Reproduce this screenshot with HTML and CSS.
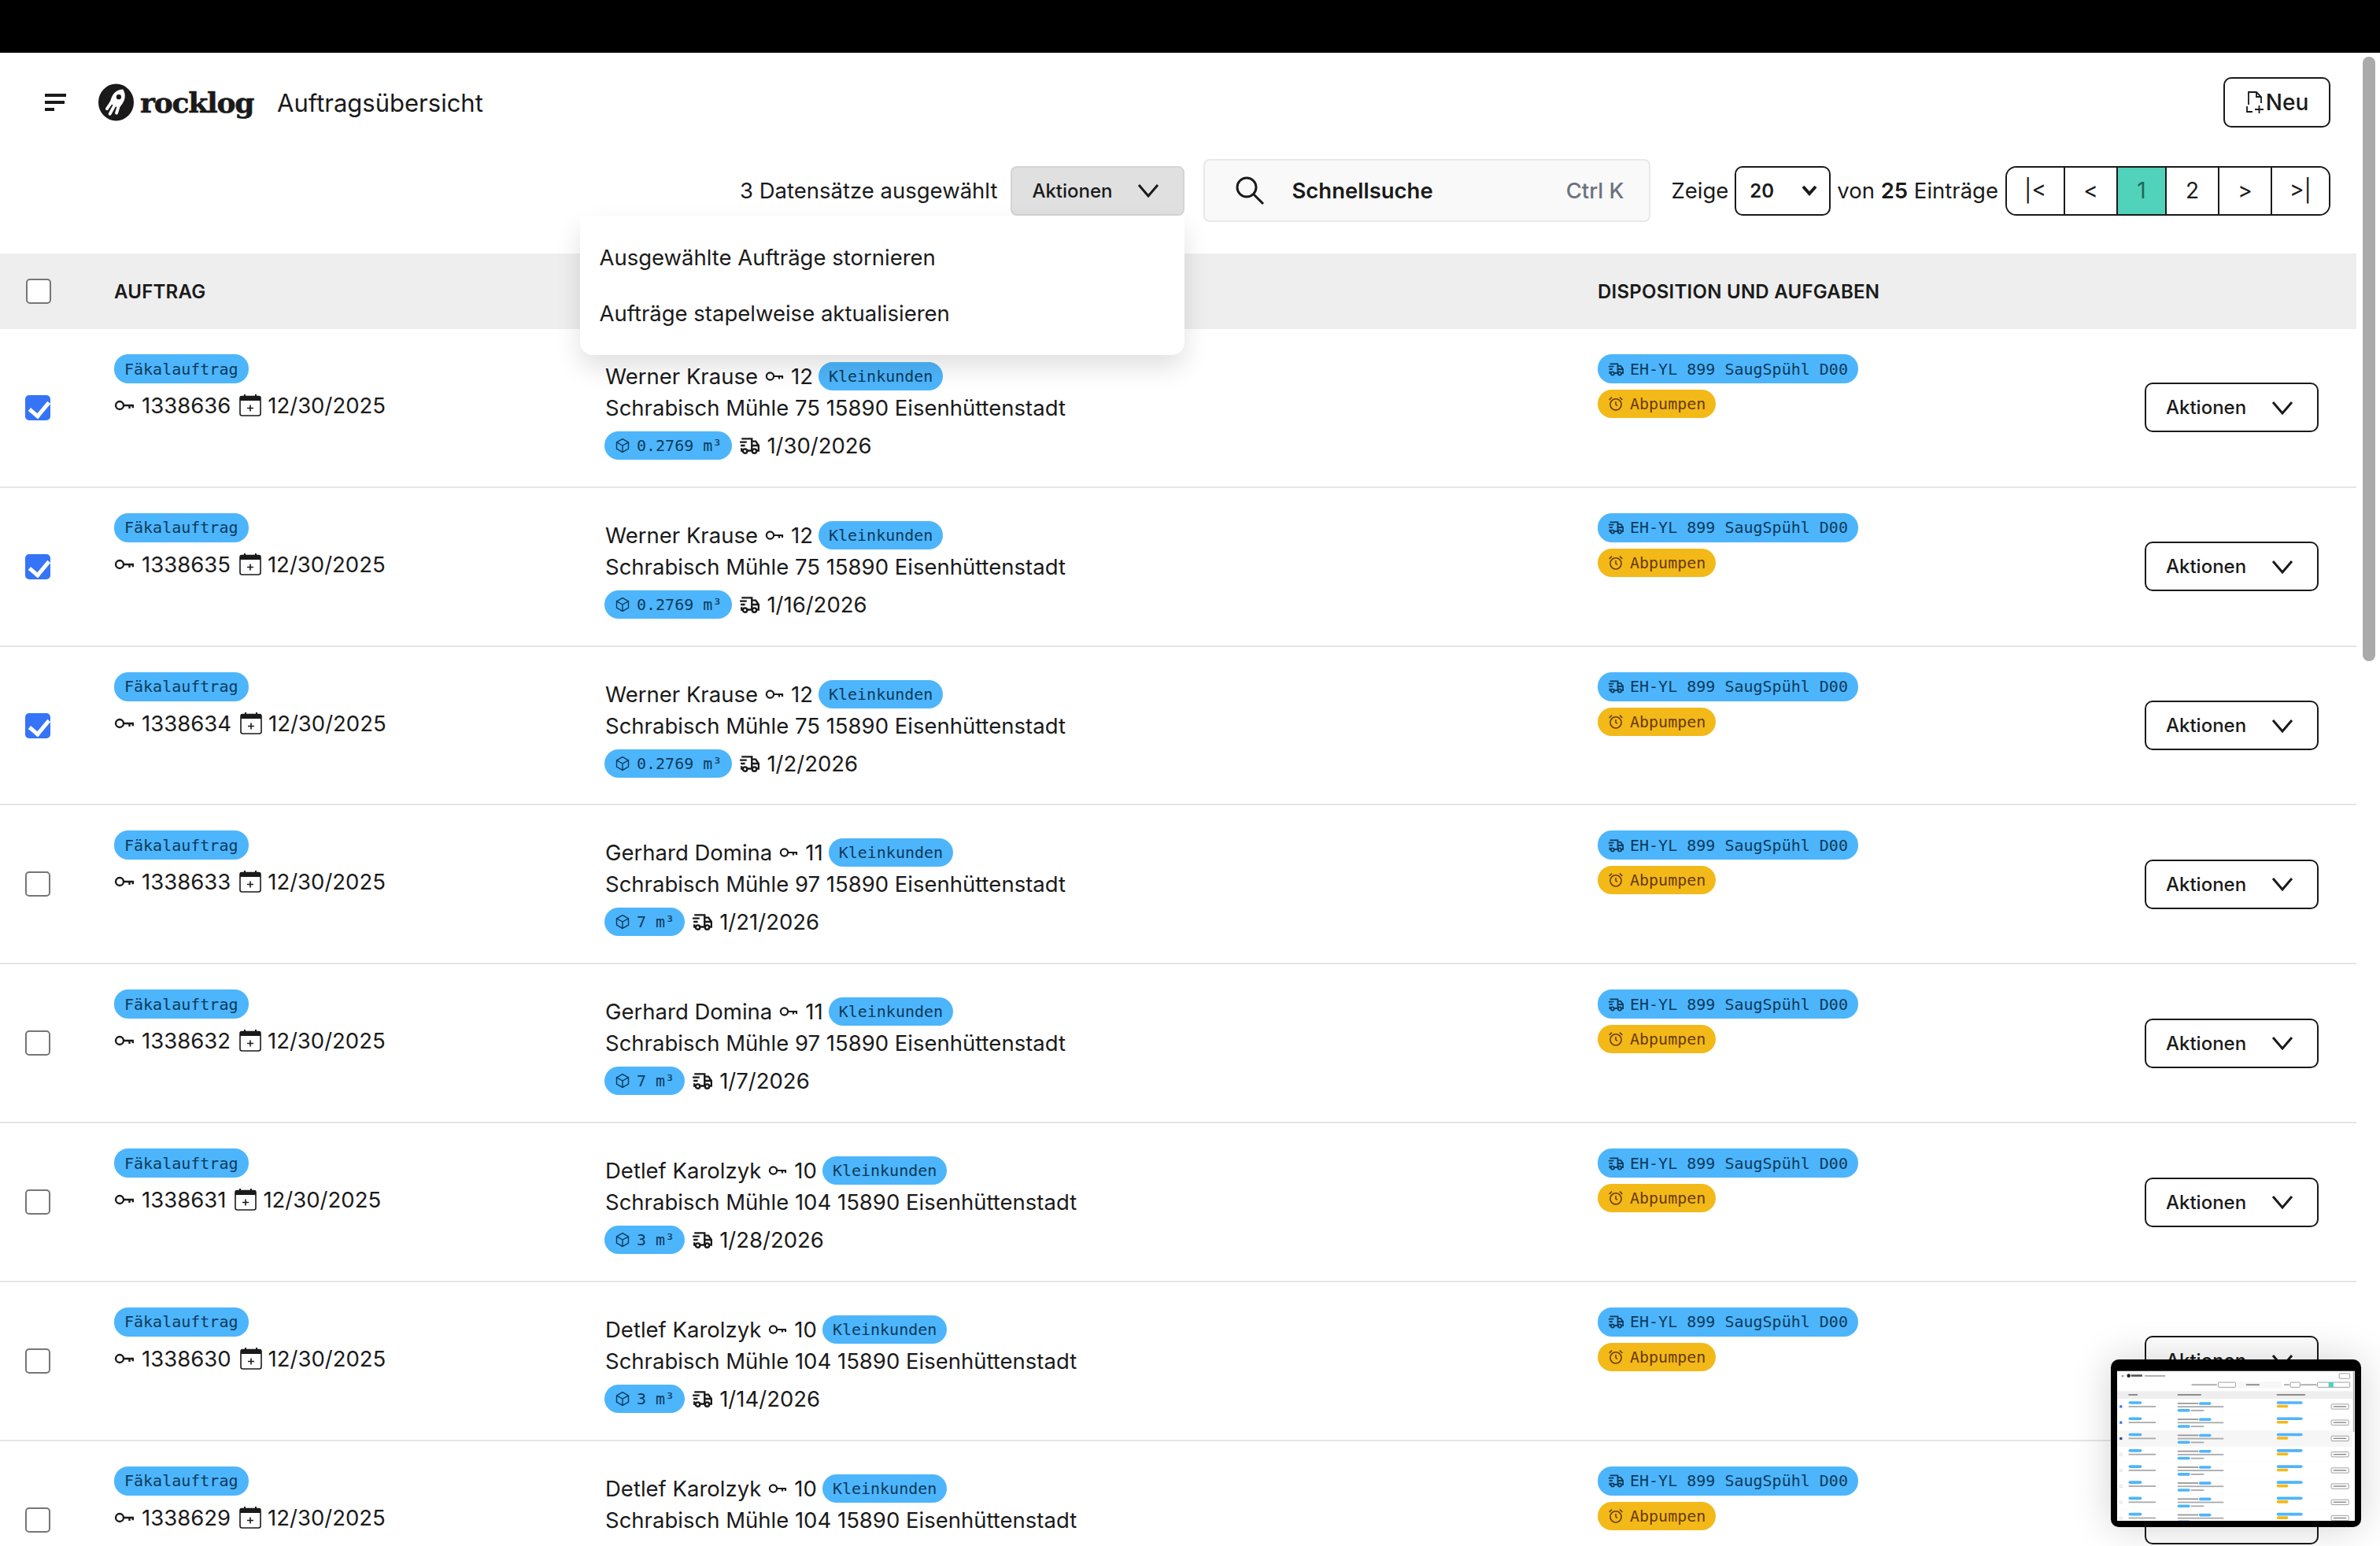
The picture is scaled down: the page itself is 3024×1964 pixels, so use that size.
FILE: index.html
```html
<!DOCTYPE html>
<html lang="de">
<head>
    <meta charset="UTF-8">
    <meta name="viewport" content="width=device-width, initial-scale=1.0">
    <title>Auftragsübersicht</title>
    <link rel="stylesheet" href="styles.css">
</head>
<body>
    <!-- shared icons -->
    <svg class="icon-defs" width="0" height="0">
        <symbol id="i-key" viewBox="0 0 24 24"><g fill="none" stroke="currentColor" stroke-width="2.2"><circle cx="6.5" cy="12" r="4.6"/><path d="M11 12h12M18 12v3.6M22 12v3"/></g></symbol>
        <symbol id="i-cal" viewBox="0 0 28 28"><g fill="none" stroke="currentColor" stroke-width="1.6"><rect x="1" y="2.5" width="26" height="24.5" rx="2.5"/><path d="M10 17.5h8M14 13.5v8"/></g><path d="M1 2.5h26v5.5H1z" fill="currentColor"/><path d="M7 0v3M21 0v3" stroke="currentColor" stroke-width="2"/></symbol>
        <symbol id="i-truck" viewBox="0 0 24 24"><g fill="none" stroke="currentColor" stroke-width="2.2"><path d="M3 4h12v14M1 8h8M2 12h5M3 15v3h1.500M10 18h5"/><path d="M15 7h4.500L23 12v6h-2M15 12h8"/><circle cx="7" cy="18.5" r="2.500"/><circle cx="18" cy="18.5" r="2.500"/></g></symbol>
        <symbol id="i-box" viewBox="0 0 24 24"><g fill="none" stroke="currentColor" stroke-width="1.7"><path d="M12 2l9 5v10l-9 5-9-5V7z"/><path d="M3 7l9 5 9-5M12 12v10"/></g></symbol>
        <symbol id="i-alarm" viewBox="0 0 24 24"><g fill="none" stroke="currentColor" stroke-width="1.9"><circle cx="12" cy="13" r="8.500"/><path d="M12 8.500V13l2.500 2M2 6l4-4M22 6l-4-4"/></g></symbol>
        <symbol id="i-chev" viewBox="0 0 28 18"><path d="M2 2l12 14L26 2" fill="none" stroke="currentColor" stroke-width="3"/></symbol>
    </svg>

    <div class="system-bar"></div>

    <div class="page">
        <header class="top">
            <div class="brand">
                <div class="burger"><span></span><span></span><span></span></div>
                <svg class="logo" viewBox="0 0 48 48">
                    <ellipse cx="24" cy="24" rx="23" ry="24" fill="#1a1a1a"/>
                    <g transform="rotate(28 24 24)">
                        <path d="M24 5c7 4 9 11 8 17l-1 7H17l-1-7c-1-6 1-13 8-17z" fill="#fff"/>
                        <path d="M18.500 28l-1 9M24 28v13M29.500 28l1.500 8" fill="none" stroke="#fff" stroke-width="4" stroke-linecap="round"/>
                    </g>
                    <circle cx="27.500" cy="17" r="3.200" fill="#1a1a1a"/>
                </svg>
                <span class="logo-text">rocklog</span>
                <h1 class="page-title">Auftragsübersicht</h1>
            </div>
            <button class="btn-new">
                <svg class="new-icon" viewBox="0 0 24 30"><path d="M4 18V2h10l6 6v8M14 2v6h6M2 20v7h7M12 24h11M17.500 19v10" fill="none" stroke="currentColor" stroke-width="1.8"/></svg>
                Neu
            </button>
        </header>

        <div class="toolbar">
            <span class="selected-info">3 Datensätze ausgewählt</span>
            <div class="bulk-wrap">
                <button class="btn-actions bulk">Aktionen <svg class="chev"><use href="#i-chev"/></svg></button>
                <div class="bulk-menu">
                    <a class="bulk-item">Ausgewählte Aufträge stornieren</a>
                    <a class="bulk-item">Aufträge stapelweise aktualisieren</a>
                </div>
            </div>
            <div class="search">
                <svg class="search-icon" viewBox="0 0 38 38"><g fill="none" stroke="#1a1a1a" stroke-width="3"><circle cx="15" cy="15" r="12"/><path d="M24 24l12 12"/></g></svg>
                <span class="search-label">Schnellsuche</span>
                <span class="search-key">Ctrl K</span>
            </div>
            <span class="show-label">Zeige</span>
            <div class="page-size">20 <svg viewBox="0 0 20 14"><path d="M2 2l8 9 8-9" fill="none" stroke="#1a1a1a" stroke-width="4"/></svg></div>
            <span class="count-label">von <b>25</b> Einträge</span>
            <div class="pager">
                <button class="pager-first">|&lt;</button>
                <button>&lt;</button>
                <button class="current">1</button>
                <button>2</button>
                <button>&gt;</button>
                <button class="pager-last">&gt;|</button>
            </div>
        </div>

        <div class="table">
            <div class="row head">
                <div class="cell-check"><input type="checkbox"></div>
                <div>AUFTRAG</div>
                <div>KUNDE UND LIEFERUNG</div>
                <div>DISPOSITION UND AUFGABEN</div>
                <div></div>
            </div>

            <div class="row">
                <div class="cell-check"><input type="checkbox" checked></div>
                <div class="cell-order">
                    <span class="badge">Fäkalauftrag</span>
                    <div class="order-line"><svg class="ic-key"><use href="#i-key"/></svg>1338636<svg class="ic-cal"><use href="#i-cal"/></svg>12/30/2025</div>
                </div>
                <div class="cell-customer">
                    <div class="cust-line">Werner Krause<svg class="ic-key small"><use href="#i-key"/></svg>12<span class="badge low">Kleinkunden</span></div>
                    <div class="cust-line">Schrabisch Mühle 75 15890 Eisenhüttenstadt</div>
                    <div class="cust-line third"><span class="badge low"><svg class="ic-badge"><use href="#i-box"/></svg>0.2769 m³</span><svg class="ic-truck"><use href="#i-truck"/></svg>1/30/2026</div>
                </div>
                <div class="cell-dispo">
                    <span class="badge"><svg class="ic-badge"><use href="#i-truck"/></svg>EH-YL 899 SaugSpühl D00</span>
                    <span class="badge low amber"><svg class="ic-badge"><use href="#i-alarm"/></svg>Abpumpen</span>
                </div>
                <div class="cell-action"><button class="btn-actions">Aktionen <svg class="chev"><use href="#i-chev"/></svg></button></div>
            </div>

            <div class="row">
                <div class="cell-check"><input type="checkbox" checked></div>
                <div class="cell-order">
                    <span class="badge">Fäkalauftrag</span>
                    <div class="order-line"><svg class="ic-key"><use href="#i-key"/></svg>1338635<svg class="ic-cal"><use href="#i-cal"/></svg>12/30/2025</div>
                </div>
                <div class="cell-customer">
                    <div class="cust-line">Werner Krause<svg class="ic-key small"><use href="#i-key"/></svg>12<span class="badge low">Kleinkunden</span></div>
                    <div class="cust-line">Schrabisch Mühle 75 15890 Eisenhüttenstadt</div>
                    <div class="cust-line third"><span class="badge low"><svg class="ic-badge"><use href="#i-box"/></svg>0.2769 m³</span><svg class="ic-truck"><use href="#i-truck"/></svg>1/16/2026</div>
                </div>
                <div class="cell-dispo">
                    <span class="badge"><svg class="ic-badge"><use href="#i-truck"/></svg>EH-YL 899 SaugSpühl D00</span>
                    <span class="badge low amber"><svg class="ic-badge"><use href="#i-alarm"/></svg>Abpumpen</span>
                </div>
                <div class="cell-action"><button class="btn-actions">Aktionen <svg class="chev"><use href="#i-chev"/></svg></button></div>
            </div>

            <div class="row">
                <div class="cell-check"><input type="checkbox" checked></div>
                <div class="cell-order">
                    <span class="badge">Fäkalauftrag</span>
                    <div class="order-line"><svg class="ic-key"><use href="#i-key"/></svg>1338634<svg class="ic-cal"><use href="#i-cal"/></svg>12/30/2025</div>
                </div>
                <div class="cell-customer">
                    <div class="cust-line">Werner Krause<svg class="ic-key small"><use href="#i-key"/></svg>12<span class="badge low">Kleinkunden</span></div>
                    <div class="cust-line">Schrabisch Mühle 75 15890 Eisenhüttenstadt</div>
                    <div class="cust-line third"><span class="badge low"><svg class="ic-badge"><use href="#i-box"/></svg>0.2769 m³</span><svg class="ic-truck"><use href="#i-truck"/></svg>1/2/2026</div>
                </div>
                <div class="cell-dispo">
                    <span class="badge"><svg class="ic-badge"><use href="#i-truck"/></svg>EH-YL 899 SaugSpühl D00</span>
                    <span class="badge low amber"><svg class="ic-badge"><use href="#i-alarm"/></svg>Abpumpen</span>
                </div>
                <div class="cell-action"><button class="btn-actions">Aktionen <svg class="chev"><use href="#i-chev"/></svg></button></div>
            </div>

            <div class="row">
                <div class="cell-check"><input type="checkbox"></div>
                <div class="cell-order">
                    <span class="badge">Fäkalauftrag</span>
                    <div class="order-line"><svg class="ic-key"><use href="#i-key"/></svg>1338633<svg class="ic-cal"><use href="#i-cal"/></svg>12/30/2025</div>
                </div>
                <div class="cell-customer">
                    <div class="cust-line">Gerhard Domina<svg class="ic-key small"><use href="#i-key"/></svg>11<span class="badge low">Kleinkunden</span></div>
                    <div class="cust-line">Schrabisch Mühle 97 15890 Eisenhüttenstadt</div>
                    <div class="cust-line third"><span class="badge low"><svg class="ic-badge"><use href="#i-box"/></svg>7 m³</span><svg class="ic-truck"><use href="#i-truck"/></svg>1/21/2026</div>
                </div>
                <div class="cell-dispo">
                    <span class="badge"><svg class="ic-badge"><use href="#i-truck"/></svg>EH-YL 899 SaugSpühl D00</span>
                    <span class="badge low amber"><svg class="ic-badge"><use href="#i-alarm"/></svg>Abpumpen</span>
                </div>
                <div class="cell-action"><button class="btn-actions">Aktionen <svg class="chev"><use href="#i-chev"/></svg></button></div>
            </div>

            <div class="row">
                <div class="cell-check"><input type="checkbox"></div>
                <div class="cell-order">
                    <span class="badge">Fäkalauftrag</span>
                    <div class="order-line"><svg class="ic-key"><use href="#i-key"/></svg>1338632<svg class="ic-cal"><use href="#i-cal"/></svg>12/30/2025</div>
                </div>
                <div class="cell-customer">
                    <div class="cust-line">Gerhard Domina<svg class="ic-key small"><use href="#i-key"/></svg>11<span class="badge low">Kleinkunden</span></div>
                    <div class="cust-line">Schrabisch Mühle 97 15890 Eisenhüttenstadt</div>
                    <div class="cust-line third"><span class="badge low"><svg class="ic-badge"><use href="#i-box"/></svg>7 m³</span><svg class="ic-truck"><use href="#i-truck"/></svg>1/7/2026</div>
                </div>
                <div class="cell-dispo">
                    <span class="badge"><svg class="ic-badge"><use href="#i-truck"/></svg>EH-YL 899 SaugSpühl D00</span>
                    <span class="badge low amber"><svg class="ic-badge"><use href="#i-alarm"/></svg>Abpumpen</span>
                </div>
                <div class="cell-action"><button class="btn-actions">Aktionen <svg class="chev"><use href="#i-chev"/></svg></button></div>
            </div>

            <div class="row">
                <div class="cell-check"><input type="checkbox"></div>
                <div class="cell-order">
                    <span class="badge">Fäkalauftrag</span>
                    <div class="order-line"><svg class="ic-key"><use href="#i-key"/></svg>1338631<svg class="ic-cal"><use href="#i-cal"/></svg>12/30/2025</div>
                </div>
                <div class="cell-customer">
                    <div class="cust-line">Detlef Karolzyk<svg class="ic-key small"><use href="#i-key"/></svg>10<span class="badge low">Kleinkunden</span></div>
                    <div class="cust-line">Schrabisch Mühle 104 15890 Eisenhüttenstadt</div>
                    <div class="cust-line third"><span class="badge low"><svg class="ic-badge"><use href="#i-box"/></svg>3 m³</span><svg class="ic-truck"><use href="#i-truck"/></svg>1/28/2026</div>
                </div>
                <div class="cell-dispo">
                    <span class="badge"><svg class="ic-badge"><use href="#i-truck"/></svg>EH-YL 899 SaugSpühl D00</span>
                    <span class="badge low amber"><svg class="ic-badge"><use href="#i-alarm"/></svg>Abpumpen</span>
                </div>
                <div class="cell-action"><button class="btn-actions">Aktionen <svg class="chev"><use href="#i-chev"/></svg></button></div>
            </div>

            <div class="row">
                <div class="cell-check"><input type="checkbox"></div>
                <div class="cell-order">
                    <span class="badge">Fäkalauftrag</span>
                    <div class="order-line"><svg class="ic-key"><use href="#i-key"/></svg>1338630<svg class="ic-cal"><use href="#i-cal"/></svg>12/30/2025</div>
                </div>
                <div class="cell-customer">
                    <div class="cust-line">Detlef Karolzyk<svg class="ic-key small"><use href="#i-key"/></svg>10<span class="badge low">Kleinkunden</span></div>
                    <div class="cust-line">Schrabisch Mühle 104 15890 Eisenhüttenstadt</div>
                    <div class="cust-line third"><span class="badge low"><svg class="ic-badge"><use href="#i-box"/></svg>3 m³</span><svg class="ic-truck"><use href="#i-truck"/></svg>1/14/2026</div>
                </div>
                <div class="cell-dispo">
                    <span class="badge"><svg class="ic-badge"><use href="#i-truck"/></svg>EH-YL 899 SaugSpühl D00</span>
                    <span class="badge low amber"><svg class="ic-badge"><use href="#i-alarm"/></svg>Abpumpen</span>
                </div>
                <div class="cell-action"><button class="btn-actions">Aktionen <svg class="chev"><use href="#i-chev"/></svg></button></div>
            </div>

            <div class="row">
                <div class="cell-check"><input type="checkbox"></div>
                <div class="cell-order">
                    <span class="badge">Fäkalauftrag</span>
                    <div class="order-line"><svg class="ic-key"><use href="#i-key"/></svg>1338629<svg class="ic-cal"><use href="#i-cal"/></svg>12/30/2025</div>
                </div>
                <div class="cell-customer">
                    <div class="cust-line">Detlef Karolzyk<svg class="ic-key small"><use href="#i-key"/></svg>10<span class="badge low">Kleinkunden</span></div>
                    <div class="cust-line">Schrabisch Mühle 104 15890 Eisenhüttenstadt</div>
                </div>
                <div class="cell-dispo">
                    <span class="badge"><svg class="ic-badge"><use href="#i-truck"/></svg>EH-YL 899 SaugSpühl D00</span>
                    <span class="badge low amber"><svg class="ic-badge"><use href="#i-alarm"/></svg>Abpumpen</span>
                </div>
                <div class="cell-action"><button class="btn-actions">Aktionen <svg class="chev"><use href="#i-chev"/></svg></button></div>
            </div>
        </div>
    </div>

    <div class="scroll-thumb"></div>

    <!-- screenshot preview floating in the corner, coordinates are the page's own -->
    <div class="preview">
        <svg class="preview-screen" viewBox="0 0 3024 1964" preserveAspectRatio="none">
            <defs>
                <g id="mini-row">
                    <rect x="145" y="32" width="169" height="37" rx="18" fill="#4db5fb"/>
                    <rect x="146" y="90" width="345" height="18" fill="#aaa"/>
                    <rect x="769" y="50" width="265" height="18" fill="#999"/>
                    <rect x="1041" y="42" width="156" height="36" rx="18" fill="#4db5fb"/>
                    <rect x="769" y="92" width="585" height="18" fill="#aaa"/>
                    <rect x="768" y="130" width="161" height="36" rx="18" fill="#4db5fb"/>
                    <rect x="939" y="140" width="165" height="18" fill="#aaa"/>
                    <rect x="2030" y="32" width="329" height="37" rx="18" fill="#4db5fb"/>
                    <rect x="2030" y="77" width="148" height="36" rx="18" fill="#f2b918"/>
                    <rect x="2725" y="68" width="221" height="63" rx="10" fill="#fff" stroke="#888" stroke-width="8"/>
                    <rect x="2751" y="92" width="165" height="14" fill="#888"/>
                    <rect x="0" y="200" width="2994" height="2" fill="#eee"/>
                </g>
                <rect id="mini-on" x="32" y="84" width="32" height="32" rx="5" fill="#3574f7"/>
                <rect id="mini-off" x="32" y="84" width="32" height="32" rx="14" fill="#fff" stroke="#bbb" stroke-width="5"/>
            </defs>
            <rect width="3024" height="1964" fill="#fff"/>
            <rect width="3024" height="67" fill="#000"/>
            <rect x="57" y="120" width="27" height="22" fill="#999"/>
            <circle cx="147" cy="126" r="23" fill="#222"/>
            <rect x="178" y="112" width="142" height="26" fill="#555"/>
            <rect x="352" y="120" width="260" height="18" fill="#aaa"/>
            <rect x="2825" y="98" width="136" height="64" rx="10" fill="#fff" stroke="#888" stroke-width="8"/>
            <rect x="946" y="232" width="323" height="18" fill="#aaa"/>
            <rect x="1286" y="210" width="221" height="63" rx="10" fill="#fff" stroke="#888" stroke-width="8"/>
            <rect x="1531" y="202" width="566" height="80" fill="#f7f7f7"/>
            <rect x="1641" y="232" width="170" height="18" fill="#888"/>
            <rect x="2124" y="232" width="70" height="18" fill="#aaa"/>
            <rect x="2205" y="210" width="122" height="63" rx="10" fill="#fff" stroke="#888" stroke-width="8"/>
            <rect x="2335" y="232" width="204" height="18" fill="#aaa"/>
            <rect x="2548" y="210" width="413" height="63" rx="10" fill="#fff" stroke="#888" stroke-width="8"/>
            <rect x="2690" y="210" width="62" height="63" fill="#50d2bb"/>
            <rect y="322" width="2994" height="96" fill="#eee"/>
            <rect x="145" y="360" width="116" height="16" fill="#777"/>
            <rect x="769" y="360" width="300" height="16" fill="#777"/>
            <rect x="2030" y="360" width="362" height="16" fill="#777"/>
            <rect x="3002" y="72" width="14" height="768" rx="7" fill="#aaa"/>
            <rect y="822" width="2994" height="200" fill="#f6f6f6"/>
            <use href="#mini-row" y="418"/><use href="#mini-on" y="418"/>
            <use href="#mini-row" y="620"/><use href="#mini-on" y="620"/>
            <use href="#mini-row" y="822"/><rect x="32" y="906" width="32" height="32" fill="#25479e"/>
            <use href="#mini-row" y="1024"/><use href="#mini-off" y="1024"/>
            <use href="#mini-row" y="1226"/><use href="#mini-off" y="1226"/>
            <use href="#mini-row" y="1427"/><use href="#mini-off" y="1427"/>
            <use href="#mini-row" y="1629"/><use href="#mini-off" y="1629"/>
            <use href="#mini-row" y="1830"/><use href="#mini-off" y="1830"/>
        </svg>
    </div>
</body>
</html>
```

FILE: styles.css
```css
* {
    margin: 0;
    padding: 0;
    box-sizing: border-box;
    font-family: Inter, "Noto Sans", sans-serif;
}
body {
    position: relative;
    width: 3024px;
    height: 1964px;
    overflow: hidden;
    background: white;
    color: #1a1a1a;
    font-size: 27.5px;
}
button {
    background: white;
    color: #1a1a1a;
    font-size: 24px;
}
.icon-defs {
    position: absolute;
}
.system-bar {
    height: 67px;
    background: black;
}
.page {
    width: 2994px;
}

/* header */
.top {
    display: flex;
    justify-content: space-between;
    align-items: center;
    padding: 31px 33px 40px 57px;
}
.brand {
    display: flex;
    align-items: center;
}
.burger {
    display: flex;
    flex-direction: column;
    gap: 5px;
    width: 27px;
    margin-right: 40px;
}
.burger span {
    display: block;
    height: 4px;
    width: 100%;
    background: #1a1a1a;
}
.burger span:nth-child(2) {
    width: 25px;
}
.burger span:nth-child(3) {
    width: 12px;
}
.logo {
    width: 47px;
    height: 48px;
    margin-right: 7px;
}
.logo-text {
    font-family: "DejaVu Serif", serif;
    font-weight: 700;
    font-size: 36px;
    letter-spacing: -1.2px;
    -webkit-text-stroke: 0.6px #1a1a1a;
    width: 174px;
}
.page-title {
    font-size: 31px;
    font-weight: 400;
}
.btn-new {
    display: flex;
    align-items: center;
    justify-content: center;
    gap: 2px;
    width: 136px;
    height: 64px;
    border: 2px solid #1a1a1a;
    border-radius: 10px;
    font-size: 28px;
    font-weight: 500;
}
.new-icon {
    width: 24px;
    height: 30px;
}

/* toolbar */
.toolbar {
    display: flex;
    justify-content: flex-end;
    align-items: center;
    height: 80px;
    margin-bottom: 40px;
    padding-right: 33px;
}
.selected-info {
    margin-right: 17px;
}
.bulk-wrap {
    position: relative;
    margin-right: 24px;
}
.btn-actions {
    display: flex;
    align-items: center;
    justify-content: space-between;
    width: 221px;
    height: 63px;
    padding: 0 30px 0 25px;
    border: 2px solid #1a1a1a;
    border-radius: 10px;
    font-weight: 500;
}
.btn-actions.bulk {
    background: #e0e0e0;
    border-color: #d4d4d4;
    border-radius: 8px;
}
.chev {
    width: 28px;
    height: 18px;
}
.bulk-menu {
    position: absolute;
    top: 100%;
    right: 0;
    z-index: 5;
    width: 768px;
    padding: 18px 0 17px;
    background: white;
    border-radius: 0 0 16px 16px;
    box-shadow: 0 16px 32px rgba(0, 0, 0, 0.12);
}
.bulk-item {
    display: flex;
    align-items: center;
    height: 71px;
    padding-left: 24px;
}
.search {
    display: flex;
    align-items: center;
    width: 568px;
    height: 80px;
    margin-right: 26px;
    padding: 0 32px 0 38px;
    background: #f9f9f9;
    border: 2px solid #e8e8e8;
    border-radius: 8px;
    font-weight: 600;
}
.search-icon {
    width: 38px;
    height: 38px;
    margin-right: 34px;
}
.search-label {
    flex: 1;
}
.search-key {
    color: #6b7280;
    font-weight: 500;
}
.show-label {
    margin-right: 8px;
}
.page-size {
    display: flex;
    align-items: center;
    justify-content: space-between;
    width: 122px;
    height: 63px;
    margin-right: 8px;
    padding: 0 15px 0 17px;
    border: 2px solid #1a1a1a;
    border-radius: 10px;
    font-size: 24px;
    font-weight: 600;
}
.page-size svg {
    width: 20px;
    height: 14px;
}
.count-label {
    margin-right: 9px;
}
.count-label b {
    font-weight: 600;
}
.pager {
    display: flex;
    height: 63px;
    border: 2px solid #1a1a1a;
    border-radius: 14px;
    overflow: hidden;
}
.pager button {
    width: 67px;
    border: none;
    border-right: 2px solid #1a1a1a;
    font-size: 28px;
}
.pager .pager-first {
    width: 74px;
}
.pager .pager-last {
    width: 72px;
    border-right: none;
}
.pager .current {
    width: 62px;
    background: #50d2bb;
    color: #24675c;
}

/* table */
.row {
    display: grid;
    grid-template-columns: 145px 624px 1261px 1fr 300px;
    height: 201.83px;
    border-bottom: 2px solid #e5e5e5;
}
.row.head {
    height: 96px;
    align-items: center;
    border-bottom: none;
    background: #eeeeee;
    font-size: 24px;
    font-weight: 600;
    letter-spacing: 0.25px;
}
.row.head > .cell-check {
    padding-left: 33px;
}
.cell-check {
    display: flex;
    align-items: center;
    padding-left: 32px;
}
input[type="checkbox"] {
    appearance: none;
    position: relative;
    width: 32px;
    height: 32px;
    background: white;
    border: 2px solid #767676;
    border-radius: 5px;
}
input[type="checkbox"]:checked {
    background: #3574f7;
    border-color: #3574f7;
}
input[type="checkbox"]:checked::after {
    content: "";
    position: absolute;
    left: 8px;
    top: 1px;
    width: 11px;
    height: 20px;
    border: solid white;
    border-width: 0 5px 5px 0;
    transform: rotate(40deg);
}
.badge {
    display: inline-flex;
    align-items: center;
    gap: 8px;
    height: 37px;
    padding: 0 13px;
    background: #4db5fb;
    border-radius: 18px;
    color: #0c3a5c;
    font-family: "DejaVu Sans Mono", monospace;
    font-size: 20px;
    white-space: nowrap;
}
.badge.low {
    height: 36px;
}
.badge.amber {
    background: #f2b918;
    color: #6b3a0a;
}
.ic-badge {
    width: 20px;
    height: 20px;
    flex-shrink: 0;
}
.cell-order {
    display: flex;
    flex-direction: column;
    align-items: flex-start;
    padding-top: 32px;
}
.order-line {
    display: flex;
    align-items: center;
    height: 42px;
    margin-top: 7px;
}
.ic-key {
    width: 26px;
    height: 26px;
    margin-right: 9px;
}
.ic-key.small {
    width: 24px;
    height: 24px;
    margin: 0 9px;
}
.ic-cal {
    width: 28px;
    height: 28px;
    margin: 0 8px 0 11px;
}
.cell-customer {
    padding-top: 40px;
}
.cust-line {
    display: flex;
    align-items: center;
    height: 40px;
}
.cust-line .badge {
    margin-left: 7px;
}
.cust-line.third {
    margin-top: 8px;
}
.cust-line.third .badge {
    margin-left: -1px;
}
.ic-truck {
    width: 26px;
    height: 26px;
    margin: 0 9px;
}
.cell-dispo {
    display: flex;
    flex-direction: column;
    align-items: flex-start;
    gap: 8px;
    padding-top: 32px;
}
.cell-action {
    display: flex;
    align-items: center;
    justify-content: flex-end;
    padding-right: 48px;
}

/* overlays */
.scroll-thumb {
    position: absolute;
    top: 72px;
    right: 6px;
    width: 16px;
    height: 768px;
    background: #aaaaaa;
    border-radius: 8px;
}
.preview {
    position: absolute;
    right: 24px;
    bottom: 24px;
    z-index: 10;
    width: 318px;
    height: 213px;
    padding: 8px;
    background: black;
    border-radius: 10px;
    box-shadow: 0 0 50px rgba(0, 0, 0, 0.18);
}
.preview-screen {
    display: block;
    width: 302px;
    height: 197px;
    filter: blur(0.4px);
}
```
